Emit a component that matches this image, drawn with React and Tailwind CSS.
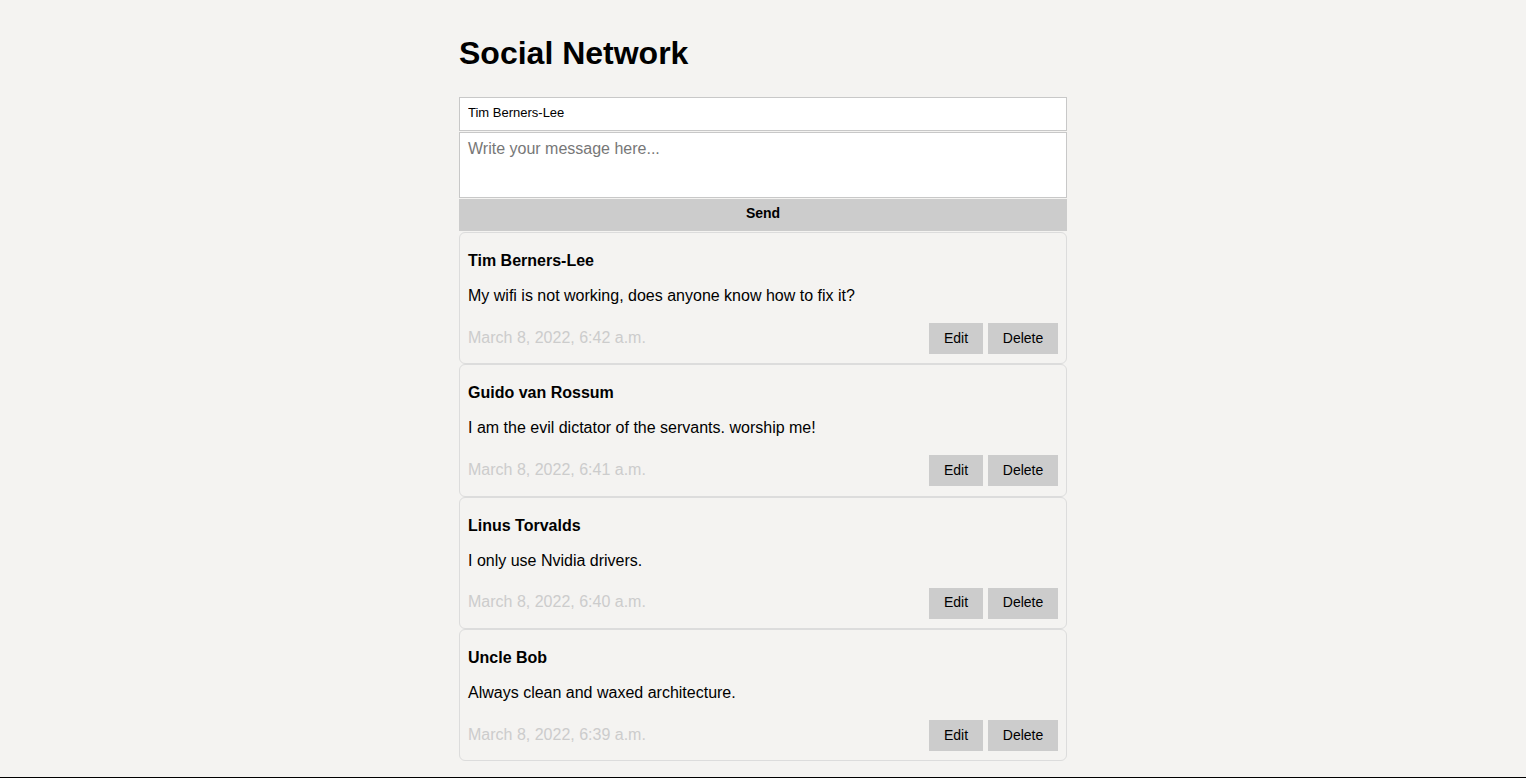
const posts = [
  {
    author: "Tim Berners-Lee",
    body: "My wifi is not working, does anyone know how to fix it?",
    date: "March 8, 2022, 6:42 a.m.",
  },
  {
    author: "Guido van Rossum",
    body: "I am the evil dictator of the servants. worship me!",
    date: "March 8, 2022, 6:41 a.m.",
  },
  {
    author: "Linus Torvalds",
    body: "I only use Nvidia drivers.",
    date: "March 8, 2022, 6:40 a.m.",
  },
  {
    author: "Uncle Bob",
    body: "Always clean and waxed architecture.",
    date: "March 8, 2022, 6:39 a.m.",
  },
];

function Post({ post }) {
  return (
    <div className="border border-[#dcdcdc] rounded-md px-2 pt-[19px] pb-[9.35px]">
      <h3 className="text-base font-bold leading-[18px] text-black">
        {post.author}
      </h3>
      <p className="mt-[17px] text-base leading-[18px] text-black">{post.body}</p>
      <div className="mt-[18px] flex items-center justify-between">
        <span className="text-base text-[#cccccc] pb-[2px]">{post.date}</span>
        <div className="flex gap-[5px]">
          <button className="h-[31px] w-[54px] bg-[#cccccc] text-sm text-black pb-[2px]">
            Edit
          </button>
          <button className="h-[31px] w-[70px] bg-[#cccccc] text-sm text-black pb-[2px]">
            Delete
          </button>
        </div>
      </div>
    </div>
  );
}

export default function App() {
  return (
    <div className="min-h-[778px] bg-[#f4f3f1] font-['Liberation_Sans',Arial,sans-serif] flex flex-col">
      <main className="w-[608px] mx-auto pt-[35px]">
        <h1 className="text-[32px] font-bold leading-[36px] text-black">
          Social Network
        </h1>
        <form className="mt-[26px] flex flex-col" onSubmit={(e) => e.preventDefault()}>
          <input
            className="h-[34px] border border-[#c8c8c8] bg-white px-2 pb-1 text-[13px] text-black outline-none"
            defaultValue="Tim Berners-Lee"
          />
          <textarea
            className="mt-px h-[66px] resize-none border border-[#c8c8c8] bg-white px-2 pt-[4px] pb-2 text-base text-black placeholder:text-[#777] outline-none"
            placeholder="Write your message here..."
          />
          <button className="mt-px h-[32px] bg-[#cccccc] pb-1 text-sm font-bold text-black">
            Send
          </button>
        </form>
        <div className="mt-px flex flex-col">
          {posts.map((p) => (
            <Post key={p.date} post={p} />
          ))}
        </div>
      </main>
      <div className="mt-auto border-b border-black" />
    </div>
  );
}
